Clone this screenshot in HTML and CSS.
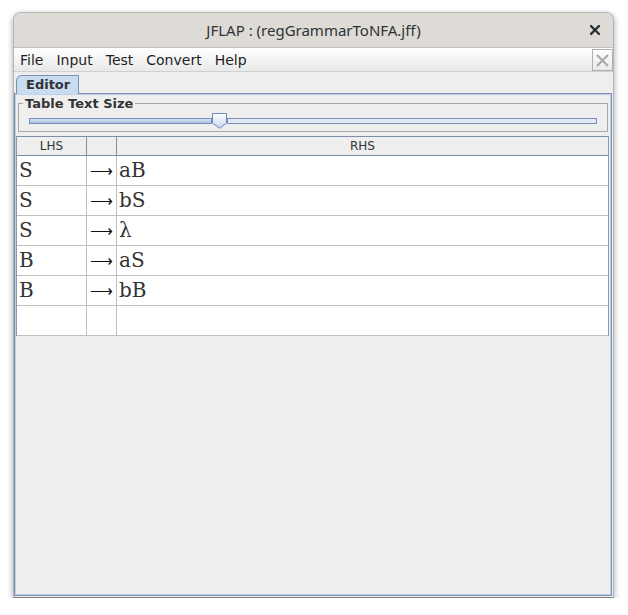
FILE: index.html
```html
<!DOCTYPE html>
<html>
<head>
<meta charset="utf-8">
<link rel="stylesheet" href="styles.css">
</head>
<body>
<div class="window">
  <div class="titlebar">
    <span class="title">JFLAP : (regGrammarToNFA.jff)</span>
    <span class="close"><svg width="10" height="10" viewBox="0 0 10 10"><path d="M1 1 L9 9 M9 1 L1 9" stroke="#2e3436" stroke-width="2.4" stroke-linecap="square"/></svg></span>
  </div>
  <div class="menubar">
    <span class="menu">File</span>
    <span class="menu">Input</span>
    <span class="menu">Test</span>
    <span class="menu">Convert</span>
    <span class="menu">Help</span>
    <span class="menu-close"><svg width="13" height="13" viewBox="0 0 13 13"><path d="M1 1 L12 12 M12 1 L1 12" stroke="#a8a8a8" stroke-width="2"/></svg></span>
  </div>
  <div class="content">
    <div class="tabs"><div class="tab">Editor</div></div>
    <div class="tabpane">
      <fieldset class="group">
        <legend>Table Text Size</legend>
        <div class="slider">
          <div class="track-fill"></div>
          <svg class="thumb" width="15" height="16" viewBox="0 0 15 16">
            <defs><linearGradient id="tg" x1="0" y1="0" x2="0" y2="1"><stop offset="0" stop-color="#ffffff"/><stop offset="1" stop-color="#c4d6ee"/></linearGradient></defs>
            <path d="M0.5 0.5 H14.5 V10 L7.5 15.3 L0.5 10 Z" fill="url(#tg)" stroke="#6a86ba"/>
          </svg>
          <div class="track-rest"></div>
        </div>
      </fieldset>
      <div class="grid">
        <div class="hcell">LHS</div><div class="hcell"></div><div class="hcell">RHS</div>
        <div class="cell">S</div><div class="cell arrow">⟶</div><div class="cell">aB</div>
        <div class="cell">S</div><div class="cell arrow">⟶</div><div class="cell">bS</div>
        <div class="cell">S</div><div class="cell arrow">⟶</div><div class="cell">λ</div>
        <div class="cell">B</div><div class="cell arrow">⟶</div><div class="cell">aS</div>
        <div class="cell">B</div><div class="cell arrow">⟶</div><div class="cell">bB</div>
        <div class="cell"></div><div class="cell"></div><div class="cell"></div>
      </div>
    </div>
  </div>
</div>
</body>
</html>
```
FILE: styles.css
```css
html, body {
  margin: 0;
  background: #ffffff;
  font-family: "DejaVu Sans", sans-serif;
}

.window {
  margin: 12px 0 0 13px;
  width: 601px;
  height: 586px;
  box-sizing: border-box;
  border: 1px solid #b4b4b4;
  border-bottom-color: #7e7e7e;
  border-radius: 8px 8px 0 0;
  box-shadow: 0 2px 6px rgba(0, 0, 0, 0.35);
  display: flex;
  flex-direction: column;
  overflow: hidden;
  background: #eeeeee;
}

.titlebar {
  flex: none;
  height: 35px;
  box-sizing: border-box;
  background: #dedad6;
  border-bottom: 1px solid #c4c0bb;
  display: grid;
  grid-template-columns: 1fr auto 1fr;
  align-items: center;
}

.title {
  grid-column: 2;
  font-family: "Noto Sans", sans-serif;
  font-size: 15px;
  color: #2e3436;
}

.close {
  grid-column: 3;
  justify-self: end;
  margin-right: 13px;
  display: flex;
}

.menubar {
  flex: none;
  height: 24px;
  box-sizing: border-box;
  background: linear-gradient(#ffffff, #e9e9e9);
  border-bottom: 1px solid #d0d0d0;
  display: flex;
  align-items: center;
  padding-left: 6px;
  gap: 13px;
  font-size: 14px;
  color: #1e1e1e;
}

.menu-close {
  margin-left: auto;
  width: 21px;
  height: 22px;
  box-sizing: border-box;
  border: 1px solid #b0b0b0;
  display: flex;
  align-items: center;
  justify-content: center;
  align-self: flex-start;
  margin-top: 1px;
}

.content {
  flex: 1;
  display: flex;
  flex-direction: column;
  padding: 0 1px 1px 0;
}

.tabs {
  flex: none;
  height: 21px;
  display: flex;
  align-items: flex-end;
  padding-left: 2px;
}

.tab {
  position: relative;
  z-index: 1;
  height: 19px;
  margin-bottom: -1px;
  box-sizing: border-box;
  padding: 1px 8px 0 9px;
  background: #c8dcf2;
  border: 1px solid #7d90b0;
  border-bottom: none;
  border-top-left-radius: 6px;
  font-size: 13px;
  font-weight: bold;
  color: #333333;
  line-height: 16px;
}

.tabpane {
  flex: 1;
  border: 1px solid #7d90b0;
  box-shadow: inset 0 0 0 1px #bcd0ea;
  padding: 1px;
  display: flex;
  flex-direction: column;
}

.group {
  margin: 1px 2px 0 2px;
  padding: 2px 10px 2px 10px;
  border: 1px solid #a6a6a6;
  min-width: 0;
}

.group legend {
  padding: 0 2px;
  margin-left: -6px;
  font-size: 13px;
  font-weight: bold;
  line-height: 15px;
  color: #333333;
}

.slider {
  height: 16px;
  display: flex;
  align-items: center;
}

.track-fill {
  width: 183px;
  height: 6px;
  box-sizing: border-box;
  border: 1px solid #7590bd;
  background: linear-gradient(#d6e3f4, #a9c0e2);
}

.thumb {
  flex: none;
  display: block;
  align-self: flex-start;
}

.track-rest {
  flex: 1;
  height: 6px;
  box-sizing: border-box;
  border: 1px solid #7d90b0;
  background: #dfe8f4;
}

.grid {
  margin: 4px 1px 0 0;
  display: grid;
  grid-template-columns: 70px 30px 1fr;
  border-left: 1px solid #8a99b0;
  border-right: 1px solid #8a99b0;
  background: #ffffff;
}

.hcell {
  height: 20px;
  box-sizing: border-box;
  border-top: 1px solid #7d8fa8;
  border-bottom: 1px solid #7d8fa8;
  border-right: 1px solid #7d8fa8;
  background: #eeeeee;
  font-size: 12px;
  color: #333333;
  text-align: center;
  line-height: 18px;
}

.hcell:nth-child(3) {
  border-right: none;
}

.cell {
  height: 30px;
  box-sizing: border-box;
  border-right: 1px solid #c0c0c0;
  border-bottom: 1px solid #c0c0c0;
  font-family: "DejaVu Serif", serif;
  font-size: 20px;
  line-height: 29px;
  color: #333333;
  padding-left: 2px;
}

.cell:nth-child(3n) {
  border-right: none;
}

.arrow {
  font-family: "DejaVu Sans", sans-serif;
  font-size: 16px;
  font-weight: 200;
  color: #111111;
  text-align: center;
  padding-left: 0;
}
```
